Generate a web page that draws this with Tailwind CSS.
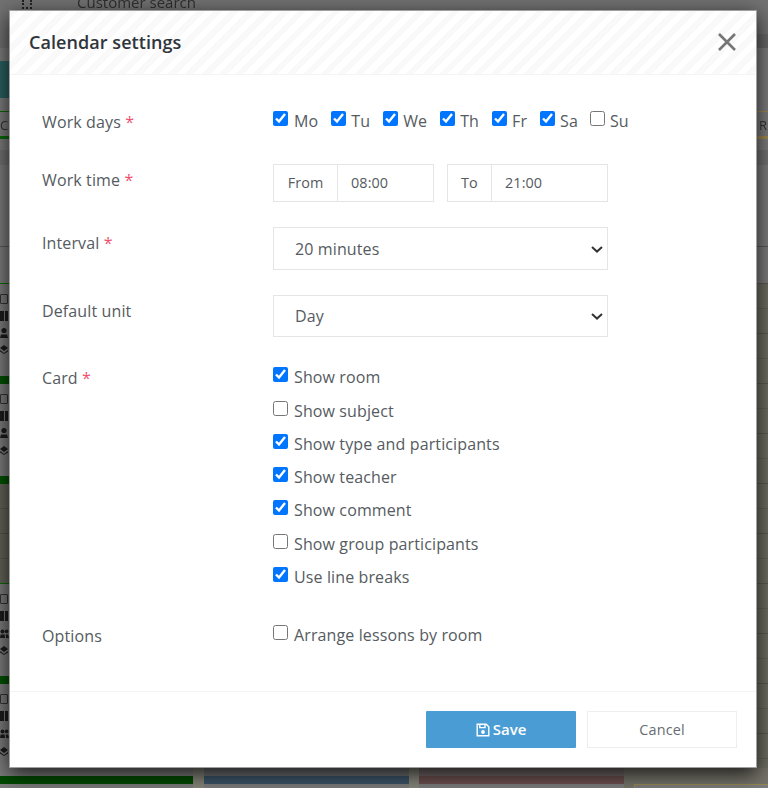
<!DOCTYPE html>
<html lang="en">
<head>
<meta charset="utf-8">
<title>Calendar settings</title>
<script src="https://cdn.jsdelivr.net/npm/@tailwindcss/browser@4"></script>
</head>
<body class="m-0 overflow-hidden">
<div class="relative w-[768px] h-[788px] overflow-hidden bg-[#7d7d7d] font-['Open_Sans',sans-serif] text-[#555b61]">
  <!-- dimmed page behind the dialog -->
  <div aria-hidden="true" class="absolute inset-0 blur-[0.4px]">
    <div class="absolute left-0 top-0 w-full h-[48px] bg-[#727272]"></div>
    <div class="absolute left-[77px] top-[-8px] text-[15px] leading-[20px] text-[#2f2f2f] whitespace-nowrap">Customer search</div>
    <div class="absolute left-[22px] top-0 w-[10px] h-[9px] border-x-2 border-b-2 border-dotted border-[#222]"></div>
    <div class="absolute left-0 top-[61px] w-[10px] h-[37px] bg-[#2b6262]"></div>
    <div class="absolute left-0 top-[111px] w-[10px] h-px bg-[#0a6b0a]"></div>
    <div class="absolute left-0 top-[136px] w-[10px] h-[3px] bg-[#0a6b0a]"></div>
    <div class="absolute left-0 top-[116px] text-[13px] leading-[18px] text-[#333]">C</div>
    <div class="absolute left-0 top-[150px] w-[10px] h-[15px] bg-[#737373]"></div>
    <div class="absolute left-0 top-[246px] w-[10px] h-px bg-[#5a5a5a]"></div>
    <div class="absolute left-0 top-[283px] w-[10px] h-px bg-[#0a6b0a]"></div>

    <div class="absolute left-0 top-[294px] w-[8px] h-[10px] rounded-[1px] border border-[#333]"></div>
    <svg class="absolute left-0 top-[311px]" width="9" height="10" viewBox="0 0 9 10" fill="#1c1c1c"><path d="M0 0H4V10H0ZM5 0H8V10H5Z"/></svg>
    <svg class="absolute left-0 top-[328px]" width="9" height="10" viewBox="0 0 9 10" fill="#1c1c1c"><circle cx="4" cy="2.6" r="2.6"/><path d="M0 10 1 6.5H7L8 10Z"/></svg>
    <svg class="absolute left-0 top-[345px]" width="9" height="9" viewBox="0 0 9 9" fill="#1c1c1c"><path d="M4 0 8 3 4 6 0 3ZM0 5 4 8 8 5V6.5L4 9 0 6.5Z"/></svg>
    <div class="absolute left-0 top-[376px] w-[10px] h-[8px] bg-[#005200]"></div>

    <div class="absolute left-0 top-[394px] w-[8px] h-[10px] rounded-[1px] border border-[#333]"></div>
    <svg class="absolute left-0 top-[411px]" width="9" height="10" viewBox="0 0 9 10" fill="#1c1c1c"><path d="M0 0H4V10H0ZM5 0H8V10H5Z"/></svg>
    <svg class="absolute left-0 top-[428px]" width="9" height="10" viewBox="0 0 9 10" fill="#1c1c1c"><circle cx="4" cy="2.6" r="2.6"/><path d="M0 10 1 6.5H7L8 10Z"/></svg>
    <svg class="absolute left-0 top-[446px]" width="9" height="9" viewBox="0 0 9 9" fill="#1c1c1c"><path d="M4 0 8 3 4 6 0 3ZM0 5 4 8 8 5V6.5L4 9 0 6.5Z"/></svg>
    <div class="absolute left-0 top-[476px] w-[10px] h-[8px] bg-[#005200]"></div>

    <div class="absolute left-0 top-[484px] w-[10px] h-[99px] bg-[#65645a]"></div>
    <div class="absolute left-0 top-[508px] w-[10px] h-px bg-[#5a594f]"></div>
    <div class="absolute left-0 top-[533px] w-[10px] h-px bg-[#54534a]"></div>
    <div class="absolute left-0 top-[558px] w-[10px] h-px bg-[#5a594f]"></div>
    <div class="absolute left-0 top-[583px] w-[10px] h-px bg-[#0a6b0a]"></div>

    <div class="absolute left-0 top-[594px] w-[8px] h-[10px] rounded-[1px] border border-[#333]"></div>
    <svg class="absolute left-0 top-[611px]" width="9" height="10" viewBox="0 0 9 10" fill="#1c1c1c"><path d="M0 0H4V10H0ZM5 0H8V10H5Z"/></svg>
    <svg class="absolute left-0 top-[629px]" width="9" height="9" viewBox="0 0 9 9" fill="#1c1c1c"><circle cx="2.5" cy="2.4" r="2"/><circle cx="6.6" cy="2.4" r="1.8"/><path d="M0 9 .6 5.5H4.6L5 9ZM6 9 5.8 5.5H8L9 9Z"/></svg>
    <svg class="absolute left-0 top-[646px]" width="9" height="9" viewBox="0 0 9 9" fill="#1c1c1c"><path d="M4 0 8 3 4 6 0 3ZM0 5 4 8 8 5V6.5L4 9 0 6.5Z"/></svg>
    <div class="absolute left-0 top-[676px] w-[10px] h-[8px] bg-[#005200]"></div>

    <div class="absolute left-0 top-[694px] w-[8px] h-[10px] rounded-[1px] border border-[#333]"></div>
    <svg class="absolute left-0 top-[711px]" width="9" height="10" viewBox="0 0 9 10" fill="#1c1c1c"><path d="M0 0H4V10H0ZM5 0H8V10H5Z"/></svg>
    <svg class="absolute left-0 top-[729px]" width="9" height="9" viewBox="0 0 9 9" fill="#1c1c1c"><circle cx="2.5" cy="2.4" r="2"/><circle cx="6.6" cy="2.4" r="1.8"/><path d="M0 9 .6 5.5H4.6L5 9ZM6 9 5.8 5.5H8L9 9Z"/></svg>
    <svg class="absolute left-0 top-[747px]" width="9" height="9" viewBox="0 0 9 9" fill="#1c1c1c"><path d="M4 0 8 3 4 6 0 3ZM0 5 4 8 8 5V6.5L4 9 0 6.5Z"/></svg>

    <div class="absolute left-[757px] top-[34px] w-[11px] h-[14px] bg-[#686868]"></div>
    <div class="absolute left-[757px] top-[111px] w-[11px] h-px bg-[#a08a50]"></div>
    <div class="absolute left-[759px] top-[116px] text-[13px] leading-[18px] text-[#333]">R</div>
    <div class="absolute left-[757px] top-[136px] w-[11px] h-[3px] bg-[#a08a50]"></div>
    <div class="absolute left-[757px] top-[150px] w-[11px] h-[15px] bg-[#737373]"></div>
    <div class="absolute left-[757px] top-[246px] w-[11px] h-px bg-[#5a5a5a]"></div>
    <div class="absolute left-[757px] top-[283px] w-[11px] h-[501px] bg-[#6f6e63] bg-[repeating-linear-gradient(to_bottom,#5c5b51_0,#5c5b51_1px,transparent_1px,transparent_25px,#64635a_25px,#64635a_26px,transparent_26px,transparent_50px)]"></div>

    <!-- bottom row -->
    <div class="absolute left-0 top-[776px] w-[193px] h-[8px] bg-[#004a00]"></div>
    <div class="absolute left-[193px] top-[768px] w-[11px] h-[20px] bg-[#86867a]"></div>
    <div class="absolute left-[204px] top-[768px] w-[205px] h-[8px] bg-[#6e7174]"></div>
    <div class="absolute left-[204px] top-[776px] w-[205px] h-[8px] bg-[#3c566a]"></div>
    <div class="absolute left-[409px] top-[768px] w-[10px] h-[20px] bg-[#86867a]"></div>
    <div class="absolute left-[419px] top-[768px] w-[205px] h-[8px] bg-[#736868]"></div>
    <div class="absolute left-[419px] top-[776px] w-[205px] h-[8px] bg-[#6e5050]"></div>
    <div class="absolute left-[624px] top-[768px] w-[144px] h-[20px] bg-[#76746a]"></div>
    <div class="absolute left-[634px] top-[784px] w-[134px] h-[4px] bg-[#7d7d7d] border-l border-t border-[#9a8a50]"></div>
  </div>

  <!-- dialog -->
  <div class="absolute left-[9px] top-[10px] w-[748px] h-[758px] flex flex-col bg-white border border-[#a0a0a0] shadow-[0_6px_20px_rgba(0,0,0,0.8)]">
    <div class="h-[64px] shrink-0 flex items-center justify-between pl-[19px] pr-[19px] border-b border-[#f4f4f4] bg-[repeating-linear-gradient(135deg,#f9f9f9_0,#f9f9f9_6px,#ffffff_6px,#ffffff_12px)]">
      <h1 class="text-[18px] leading-[24px] font-[550] tracking-[0.06px] text-[#2f353b] -mt-[1px]">Calendar settings</h1>
      <svg width="20" height="20" viewBox="0 0 20 20" class="-mt-[1px]" fill="none" stroke="#757575" stroke-width="2.6"><path d="M2 2 18 18M18 2 2 18"/></svg>
    </div>

    <div class="flex-1 flex flex-col pl-[32px] text-[16px] leading-[22px] tracking-[0.12px]">
      <!-- Work days -->
      <div class="flex mt-[26px] h-[63px]">
        <div class="w-[231px] pt-[10px]">Work days <span class="text-[#f0506e]">*</span></div>
        <div class="flex gap-[13px] pt-[9px] h-fit">
          <label class="flex"><input type="checkbox" checked class="w-[15px] h-[15px] m-0 mt-[1px] mr-[6px] accent-[#0075ff]">Mo</label>
          <label class="flex"><input type="checkbox" checked class="w-[15px] h-[15px] m-0 mt-[1px] mr-[5px] accent-[#0075ff]">Tu</label>
          <label class="flex"><input type="checkbox" checked class="w-[15px] h-[15px] m-0 mt-[1px] mr-[5px] accent-[#0075ff]">We</label>
          <label class="flex"><input type="checkbox" checked class="w-[15px] h-[15px] m-0 mt-[1px] mr-[5px] accent-[#0075ff]">Th</label>
          <label class="flex"><input type="checkbox" checked class="w-[15px] h-[15px] m-0 mt-[1px] mr-[5px] accent-[#0075ff]">Fr</label>
          <label class="flex"><input type="checkbox" checked class="w-[15px] h-[15px] m-0 mt-[1px] mr-[5px] accent-[#0075ff]">Sa</label>
          <label class="flex -ml-[1px]"><input type="checkbox" class="w-[15px] h-[15px] m-0 mt-[1px] mr-[5px] accent-[#0075ff]">Su</label>
        </div>
      </div>
      <!-- Work time -->
      <div class="flex h-[63px]">
        <div class="w-[231px] pt-[5px]">Work time <span class="text-[#f0506e]">*</span></div>
        <div class="flex gap-[13px] h-fit text-[14.4px] tracking-[0.1px]">
          <div class="flex h-[38px] w-[161px] border border-[#e5e5e5]">
            <div class="w-[64px] shrink-0 border-r border-[#e5e5e5] flex items-center justify-center">From</div>
            <input value="08:00" class="w-full min-w-0 pl-[13px] outline-none text-[#555b61]">
          </div>
          <div class="flex h-[38px] w-[161px] border border-[#e5e5e5]">
            <div class="w-[44px] shrink-0 border-r border-[#e5e5e5] flex items-center justify-center">To</div>
            <input value="21:00" class="w-full min-w-0 pl-[13px] outline-none text-[#555b61]">
          </div>
        </div>
      </div>
      <!-- Interval -->
      <div class="flex h-[68px]">
        <div class="w-[231px] pt-[5px]">Interval <span class="text-[#f0506e]">*</span></div>
        <div class="relative w-[335px] h-[43px]">
          <select class="appearance-none w-full h-full pl-[21px] border border-[#e5e5e5] bg-white text-[#555b61] outline-none">
            <option>20 minutes</option>
          </select>
          <svg class="absolute right-[5px] top-[19px] pointer-events-none" width="12" height="7" viewBox="0 0 12 7" fill="none" stroke="#333" stroke-width="2"><path d="M1 1 6 5.6 11 1"/></svg>
        </div>
      </div>
      <!-- Default unit -->
      <div class="flex h-[65px]">
        <div class="w-[231px] pt-[5px]">Default unit</div>
        <div class="relative w-[335px] h-[42px]">
          <select class="appearance-none w-full h-full pl-[21px] border border-[#e5e5e5] bg-white text-[#555b61] outline-none">
            <option>Day</option>
          </select>
          <svg class="absolute right-[5px] top-[18px] pointer-events-none" width="12" height="7" viewBox="0 0 12 7" fill="none" stroke="#333" stroke-width="2"><path d="M1 1 6 5.6 11 1"/></svg>
        </div>
      </div>
      <!-- Card -->
      <div class="flex h-[259px]">
        <div class="w-[231px] pt-[7px]">Card <span class="text-[#f0506e]">*</span></div>
        <div class="flex flex-col pt-[6.25px] gap-[11.3px]">
          <label class="flex"><input type="checkbox" checked class="w-[15px] h-[15px] m-0 mt-[1px] mr-[6px] accent-[#0075ff]">Show room</label>
          <label class="flex"><input type="checkbox" class="w-[15px] h-[15px] m-0 mt-[1px] mr-[6px] accent-[#0075ff]">Show subject</label>
          <label class="flex"><input type="checkbox" checked class="w-[15px] h-[15px] m-0 mt-[1px] mr-[6px] accent-[#0075ff]">Show type and participants</label>
          <label class="flex"><input type="checkbox" checked class="w-[15px] h-[15px] m-0 mt-[1px] mr-[6px] accent-[#0075ff]">Show teacher</label>
          <label class="flex"><input type="checkbox" checked class="w-[15px] h-[15px] m-0 mt-[1px] mr-[6px] accent-[#0075ff]">Show comment</label>
          <label class="flex"><input type="checkbox" class="w-[15px] h-[15px] m-0 mt-[1px] mr-[6px] accent-[#0075ff]">Show group participants</label>
          <label class="flex"><input type="checkbox" checked class="w-[15px] h-[15px] m-0 mt-[1px] mr-[6px] accent-[#0075ff]">Use line breaks</label>
        </div>
      </div>
      <!-- Options -->
      <div class="flex">
        <div class="w-[231px] pt-[6px]">Options</div>
        <label class="flex pt-[5px] h-fit"><input type="checkbox" class="w-[15px] h-[15px] m-0 mt-[1px] mr-[6px] accent-[#0075ff]">Arrange lessons by room</label>
      </div>
    </div>

    <div class="h-[76px] shrink-0 flex items-start justify-end gap-[11px] pt-[19px] pr-[19px] border-t border-[#f4f4f4]">
      <button class="w-[150px] h-[37px] flex items-center justify-center gap-[3px] bg-[#4a9dd4] rounded-[1px] text-white text-[15px] font-semibold">
        <svg width="14" height="14" viewBox="0 0 14 14" fill="none" stroke="#fff" stroke-width="1.4"><path d="M1.2 1.2H10.2L12.8 3.8V12.8H1.2Z"/><path d="M3.8 1.5V4.6H9V1.5"/><circle cx="7" cy="9" r="1.9" fill="#fff" stroke="none"/></svg>
        Save
      </button>
      <button class="w-[150px] h-[37px] flex items-center justify-center border border-[#eeeeee] bg-white text-[14.4px] tracking-[0.15px] text-[#666c72]">Cancel</button>
    </div>
  </div>
</div>
</body>
</html>
